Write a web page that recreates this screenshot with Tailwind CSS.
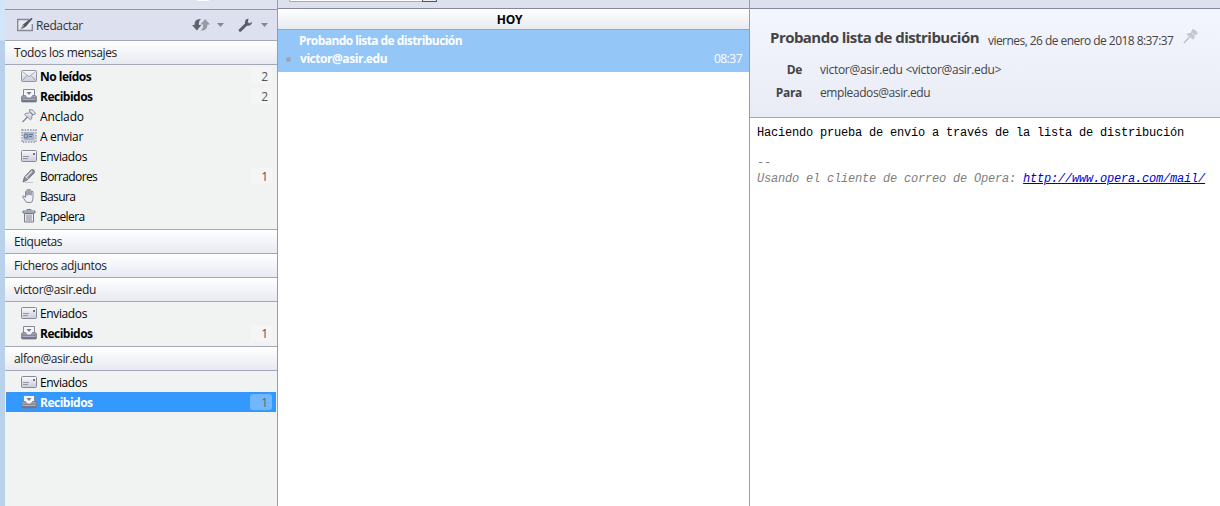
<!DOCTYPE html>
<html lang="es">
<head>
<meta charset="utf-8">
<title>Opera Mail</title>
<script src="https://cdn.jsdelivr.net/npm/@tailwindcss/browser@4"></script>
</head>
<body class="w-[1220px] h-[506px] overflow-hidden bg-white font-['Open_Sans','Noto_Sans',sans-serif] text-[12px] leading-[20px] text-black whitespace-nowrap">
<svg class="absolute w-0 h-0">
  <defs>
    <linearGradient id="metal" x1="0" y1="0" x2="0" y2="1"><stop offset="0" stop-color="#fafafc"/><stop offset="1" stop-color="#c9ccd6"/></linearGradient>
    <linearGradient id="tray" x1="0" y1="0" x2="0" y2="1"><stop offset="0" stop-color="#a5a9b8"/><stop offset="1" stop-color="#666a7c"/></linearGradient>
    <symbol id="mail" viewBox="0 0 16 16"><rect x=".5" y="2.5" width="15" height="11" rx="1" fill="url(#metal)" stroke="#9296a4"/><path d="M1.500 3.500l6.500 5.500 6.500-5.500M1.500 12.500l4.500-5M14.500 12.500l-4.500-5" fill="none" stroke="#9a9dac" stroke-width=".9"/></symbol>
    <symbol id="inbox" viewBox="0 0 16 16"><path d="M2.500 1.500h11v9h-11z" fill="#f4f5f9" stroke="#858a9a"/><path d="M5.500 4h5L8 7z" fill="#777c8d"/><path d="M.5 8.500l1.500-1h2.500l1.500 2.500h4l1.500-2.500h2.500l1.500 1v4.500q0 1-1 1h-13q-1 0-1-1z" fill="url(#tray)" stroke="#777b8d" stroke-width=".8"/><path d="M1.500 11.500h13" stroke="#b9bdca" stroke-width=".8"/></symbol>
    <symbol id="pin" viewBox="0 0 16 16"><path d="M8.500 1.500q4-.5 6 4.300l-2.800 1.200-1 1.200q.8 2.800-1.200 3.500L3.500 6.500q.8-2 3.800-1.200l1.500-1.300z" fill="url(#metal)" stroke="#858998"/><path d="M9 4l3 3M6.500 9L1.500 14" stroke="#858998" stroke-width="1.400"/></symbol>
    <symbol id="stamp" viewBox="0 0 16 16"><rect x="1" y="2" width="14" height="12" fill="#e7eaf1" stroke="#8a91a2" stroke-width="1.400" stroke-dasharray="1.500 1.200"/><rect x="2.500" y="4" width="11" height="8.500" fill="#a9b4cb"/><circle cx="5" cy="8" r="2" fill="none" stroke="#66728c"/><path d="M8 6.500h4M8 8.500h3" stroke="#66728c"/></symbol>
    <symbol id="card" viewBox="0 0 16 16"><rect x=".5" y="2.500" width="15" height="11" rx="1" fill="url(#metal)" stroke="#858998"/><path d="M2 8.500h6M2 10.500h5" stroke="#9296a5"/><path d="M12 5h2v2h-2z" fill="#6f7485"/></symbol>
    <symbol id="pen" viewBox="0 0 16 16"><path d="M4 14.500h8" stroke="#c4c6cd"/><path d="M2 14l1.500-5 6.500-7q1.500-1 3 .2 1 1.300 0 2.800l-6.500 6.800z" fill="#8b8f9d" stroke="#696d7c" stroke-width=".9"/><path d="M5 9.500l6-6.500" stroke="#dddfe6" stroke-width="1.200"/><path d="M4.500 8.500l3 2.700" stroke="#e9eaf0" stroke-width=".8"/></symbol>
    <symbol id="hand" viewBox="0 0 16 16"><path d="M5 14L1.800 9Q1.500 7.500 3 8l1.500 1.500V3.500q.8-1.500 1.500 0v4-5.500q1-1.500 2 0v5-5q1-1.300 2 .3v5-3.500q1-1.200 2 0v6.500L11 14q-3 1.300-6 0z" fill="#eff0f4" stroke="#858998" stroke-width="1"/></symbol>
    <symbol id="trash" viewBox="0 0 16 16"><path d="M6 2.500v-1h4v1M2 3h12v2H2z" fill="#d6d8df" stroke="#747887"/><path d="M3.500 5.500h9v8.500h-9z" fill="#eceef2" stroke="#747887"/><path d="M6 6.500v6.500M8 6.500v6.500M10 6.500v6.500" stroke="#80848f"/></symbol>
  </defs>
</svg>
<div class="flex h-[506px]">
  <div class="w-[5px] shrink-0 bg-linear-to-b from-[#d3e5f8] from-[40px] to-[#b9d1ea] to-[41px]"></div>

  <aside class="flex flex-col w-[273px] shrink-0 border-r border-[#9a9cab] bg-[#f1f3f3]">
    <div class="h-[10px] shrink-0 border-b border-[#94969f] bg-[#dfe3f0] flex justify-center"><div class="ml-[124px] w-[12px] h-[1px] bg-white rounded-b-full"></div></div>
    <div class="h-[31px] shrink-0 border-b border-[#a4a8b8] bg-[#dce0ef] flex items-center text-[#333] pl-[12px]">
      <svg class="size-[16px]" viewBox="0 0 16 16"><path d="M12 2.500H.7v11h14.600V7" fill="#e9ebf4" stroke="#878a96" stroke-width="1.400"/><path d="M3 13l3-5.500L14.500.8l1 1L9 9.500z" fill="#54565e"/><path d="M3 13l4-5" stroke="#d5d8e3" stroke-width=".8"/></svg>
      <span class="ml-[3px] w-[156px] pt-[2px] tracking-[-0.38px]">Redactar</span>
      <svg class="w-[18px] h-[16px]" viewBox="0 0 18 16"><path d="M9 2Q2.300 1.500 2.500 8H0l4.800 5.500L9.500 8H7Q6.300 4.500 9 2z" fill="#60636c"/><path d="M8.500 13.500q7 .5 7-6H18L13.200 2 8.500 7.500H11q.8 3.500-2.500 6z" fill="#989ba5"/></svg>
      <svg class="ml-[7px] w-[7px] h-[4px]" viewBox="0 0 7 4"><path d="M0 0h7L3.500 4z" fill="#84879a"/></svg>
      <svg class="ml-[14px] size-[15px]" viewBox="0 0 15 15"><path d="M10.500.8Q6.500 1 7 5.500L.8 11.500q-.5 2.300 2 2.300L9 7.800q4.500.5 5.200-4L11.500 5.500 9.800 4z" fill="#5b5e67"/></svg>
      <svg class="ml-[8px] w-[7px] h-[4px]" viewBox="0 0 7 4"><path d="M0 0h7L3.500 4z" fill="#84879a"/></svg>
    </div>
    <div class="h-[24px] shrink-0 border-b border-[#a4a8b8] bg-linear-to-b from-white to-[#e8eaf2] pl-[9px] leading-[23px] text-[#222]"><span class="tracking-[-0.36px]">Todos los mensajes</span></div>
    <ul class="pt-[1px] pb-[3px]">
      <li class="flex items-center h-[20px] pl-[16px] pr-[5px]"><svg class="size-[16px]"><use href="#mail"/></svg><b class="ml-[3px] pt-[2px] flex-1 tracking-[-0.5px]">No leídos</b><span class="w-[22px] h-[16px] leading-[17px] rounded-[3px] bg-[#f5f5f5] text-right pr-[4px] text-[#555]">2</span></li>
      <li class="flex items-center h-[20px] pl-[16px] pr-[5px]"><svg class="size-[16px]"><use href="#inbox"/></svg><b class="ml-[3px] pt-[2px] flex-1 tracking-[-0.5px]">Recibidos</b><span class="w-[22px] h-[16px] leading-[17px] rounded-[3px] bg-[#f5f5f5] text-right pr-[4px] text-[#555]">2</span></li>
      <li class="flex items-center h-[20px] pl-[16px]"><svg class="size-[16px]"><use href="#pin"/></svg><span class="ml-[3px] pt-[2px] tracking-[-0.15px]">Anclado</span></li>
      <li class="flex items-center h-[20px] pl-[16px]"><svg class="size-[16px]"><use href="#stamp"/></svg><span class="ml-[3px] pt-[2px] tracking-[-0.3px]">A enviar</span></li>
      <li class="flex items-center h-[20px] pl-[16px]"><svg class="size-[16px]"><use href="#card"/></svg><span class="ml-[3px] pt-[2px] tracking-[-0.37px]">Enviados</span></li>
      <li class="flex items-center h-[20px] pl-[16px] pr-[5px]"><svg class="size-[16px]"><use href="#pen"/></svg><span class="ml-[3px] pt-[2px] flex-1 tracking-[-0.62px]">Borradores</span><span class="w-[22px] h-[16px] leading-[17px] rounded-[3px] bg-[#f5f5f5] text-right pr-[4px] text-[#555]">1</span></li>
      <li class="flex items-center h-[20px] pl-[16px]"><svg class="size-[16px]"><use href="#hand"/></svg><span class="ml-[3px] pt-[2px] tracking-[-0.65px]">Basura</span></li>
      <li class="flex items-center h-[20px] pl-[16px]"><svg class="size-[16px]"><use href="#trash"/></svg><span class="ml-[3px] pt-[2px] tracking-[-0.6px]">Papelera</span></li>
    </ul>
    <div class="h-[25px] shrink-0 border-y border-[#a4a8b8] bg-linear-to-b from-white to-[#e8eaf2] pl-[9px] leading-[23px] text-[#222]"><span class="tracking-[-0.45px]">Etiquetas</span></div>
    <div class="h-[24px] shrink-0 border-b border-[#a4a8b8] bg-linear-to-b from-white to-[#e8eaf2] pl-[9px] leading-[23px] text-[#222]"><span class="tracking-[-0.37px]">Ficheros adjuntos</span></div>
    <div class="h-[24px] shrink-0 border-b border-[#a4a8b8] bg-linear-to-b from-white to-[#e8eaf2] pl-[9px] leading-[23px] text-[#222]"><span class="tracking-[-0.32px]">victor@asir.edu</span></div>
    <ul class="pt-[1px] pb-[3px]">
      <li class="flex items-center h-[20px] pl-[16px]"><svg class="size-[16px]"><use href="#card"/></svg><span class="ml-[3px] pt-[2px] tracking-[-0.37px]">Enviados</span></li>
      <li class="flex items-center h-[20px] pl-[16px] pr-[5px]"><svg class="size-[16px]"><use href="#inbox"/></svg><b class="ml-[3px] pt-[2px] flex-1 tracking-[-0.5px]">Recibidos</b><span class="w-[22px] h-[16px] leading-[17px] rounded-[3px] bg-[#f5f5f5] text-right pr-[4px] text-[#555]">1</span></li>
    </ul>
    <div class="h-[25px] shrink-0 border-y border-[#a4a8b8] bg-linear-to-b from-white to-[#e8eaf2] pl-[9px] leading-[23px] text-[#222]"><span class="tracking-[-0.38px]">alfon@asir.edu</span></div>
    <ul class="pt-[1px]">
      <li class="flex items-center h-[20px] pl-[16px]"><svg class="size-[16px]"><use href="#card"/></svg><span class="ml-[3px] pt-[2px] tracking-[-0.37px]">Enviados</span></li>
      <li class="flex items-center h-[20px] ml-[1px] mr-[1px] pl-[14px] pr-[3px] bg-[#3399ff] text-white border border-dotted border-[#b87440]"><svg class="size-[16px]"><use href="#inbox"/></svg><b class="ml-[3px] pt-[2px] flex-1 tracking-[-0.5px]">Recibidos</b><span class="w-[22px] h-[16px] leading-[17px] rounded-[3px] bg-[#70b7ff] text-right pr-[4px] text-[#666]">1</span></li>
    </ul>
  </aside>

  <section class="flex flex-col w-[472px] shrink-0 border-r border-[#9a9cab]">
    <div class="h-[9px] shrink-0 border-b border-[#85889a] bg-[#dde1ed] pl-[11px] flex">
      <div class="w-[133px] h-[2px] bg-white border-b border-l border-[#aaa] rounded-bl-sm"></div><div class="w-[15px] h-[2px] bg-[#eee] border-b border-x border-[#555]"></div>
    </div>
    <div class="h-[21px] shrink-0 border-b border-[#a0a4b2] bg-linear-to-b from-white to-[#e8eaf0] text-center pr-[8px] font-bold leading-[21px]"><span class="tracking-[-0.2px]">HOY</span></div>
    <div class="h-[42px] shrink-0 bg-[#94c6f8] text-white pt-[2px] pr-[7px]">
      <div class="pl-[21px] h-[18px] leading-[18px] font-bold"><span class="tracking-[-0.57px]">Probando lista de distribución</span></div>
      <div class="flex items-center h-[18px] pl-[8px]"><i class="size-[5px] rounded-full bg-[#9da5b0]"></i><b class="ml-[9px] flex-1 tracking-[-0.45px]">victor@asir.edu</b><span class="tracking-[-0.5px]">08:37</span></div>
    </div>
  </section>

  <main class="flex-1 flex flex-col min-w-0">
    <div class="h-[9px] shrink-0 border-b border-[#85889a] bg-[#dde1ed]"></div>
    <header class="h-[109px] shrink-0 border-b border-[#a5a7b0] bg-linear-to-b from-[#f3f6ff] to-[#e9ebf5] text-[#444] pt-[18px]">
      <div class="flex h-[22px] pl-[20px]">
        <h1 class="w-[218px] text-[15px] leading-[20px] font-bold"><span class="tracking-[-0.54px]">Probando lista de distribución</span></h1>
        <div class="w-[195px] leading-[27px]"><span class="tracking-[-0.55px]">viernes, 26 de enero de 2018 8:37:37</span></div>
        <svg class="mt-[1px] size-[16px]" viewBox="0 0 16 16"><path d="M9.500 1q3.500.5 5.500 4.500l-2.500 1.500-1 1.500q.5 2.500-1.500 3L3.500 6.500q1-2 4-1.500z" fill="#c5c8d1"/><path d="M6.500 9L1 15" stroke="#c1c4ce" stroke-width="1.800"/><path d="M9 5l3.500 3.500" stroke="#e2e4eb"/></svg>
      </div>
      <div class="flex h-[23px] leading-[23px] mt-[9px]"><b class="w-[52px] text-right tracking-[-0.3px]">De</b><span class="ml-[18px] tracking-[-0.28px]">victor@asir.edu &lt;victor@asir.edu&gt;</span></div>
      <div class="flex h-[23px] leading-[23px]"><b class="w-[52px] text-right tracking-[-0.3px]">Para</b><span class="ml-[18px] tracking-[-0.41px]">empleados@asir.edu</span></div>
    </header>
    <div class="pl-[7px] pt-[8px] font-['Liberation_Mono',monospace] text-[12px] leading-[15px] tracking-[-0.2px]">
      <p>Haciendo prueba de envío a través de la lista de distribución</p>
      <p class="mt-[15px] text-[#808080] italic">--</p>
      <p class="mt-[1px] text-[#808080] italic">Usando el cliente de correo de Opera: <a class="text-[#0000cc] underline">http://www.opera.com/mail/</a></p>
    </div>
  </main>
</div>
</body>
</html>
